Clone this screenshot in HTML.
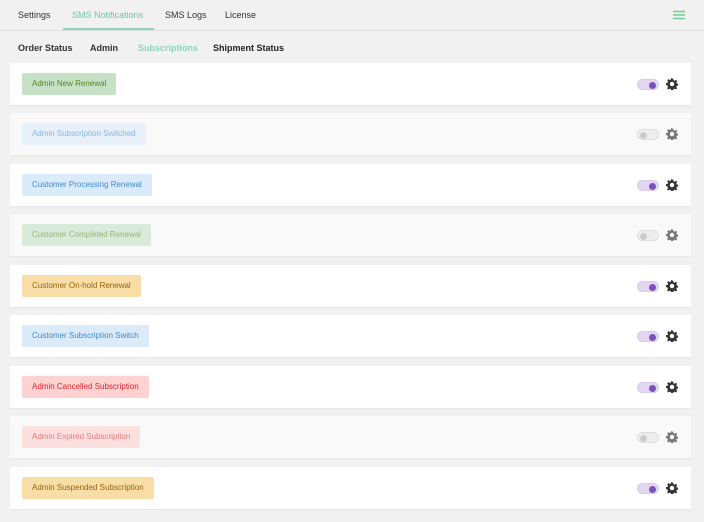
<!DOCTYPE html><html><head><style>
body{margin:0;width:704px;height:522px;background:#f1f1f1;font-family:"Liberation Sans",sans-serif;position:relative;overflow:hidden}
.tabs{position:absolute;top:0;left:0;right:0;height:30px;border-bottom:1px solid #ddd}
.tab{position:absolute;top:10px;font-size:9px;color:#333}
.tab.on{color:#6fc3a9}
.ul{position:absolute;left:63px;top:28px;width:91px;height:2px;background:#8fd3bd}
.sub{position:absolute;top:43px;font-size:9px;font-weight:bold;color:#333}
.card{position:absolute;left:10px;width:681px;height:42px;background:#fff;box-shadow:0 1px 1px rgba(0,0,0,.05)}
.card.off{background:#f9f9f9}
.b{position:absolute;left:12px;top:10px;height:22px;line-height:22px;padding:0 10px;font-size:8px;border-radius:2px}
.off .b{opacity:.6}
.g{background:#c6e1c6;color:#5b841b}.bl{background:#dcebf9;color:#3d8ad1}.o{background:#f8dda7;color:#94660c}.r{background:#ffd1d1;color:#e0242b}
.t{position:absolute;left:627px;top:16px;width:22px;height:11px;border-radius:6px;background:#e2d6f0;border:1px solid #d8cbe8;box-sizing:border-box}
.t::after{content:"";position:absolute;right:2px;top:1.5px;width:7px;height:7px;border-radius:50%;background:#7e4fc0}
.off .t{background:#eee;border-color:#ddd}
.off .t::after{left:2px;right:auto;background:#ccc}
.gear{position:absolute;left:656px;top:15px;width:12px;height:12px}
</style></head><body>
<div class="tabs">
<span class="tab" style="left:18px">Settings</span>
<span class="tab on" style="left:72px">SMS Notifications</span>
<span class="tab" style="left:165px">SMS Logs</span>
<span class="tab" style="left:225px">License</span>
<div class="ul"></div>
<svg style="position:absolute;left:673px;top:10px" width="12" height="10"><path d="M0 1.5h12M0 5h12M0 8.5h12" stroke="#6fcf97" stroke-width="1.5"/></svg>
</div>
<span class="sub" style="left:18px">Order Status</span>
<span class="sub" style="left:90px">Admin</span>
<span class="sub" style="left:138px;color:#8fd3bd">Subscriptions</span>
<span class="sub" style="left:213px;color:#222">Shipment Status</span>
<svg width="0" height="0" style="position:absolute"><defs><g id="gr"><path d="M6 0.5l1.2.1.3 1.6 1.1.5 1.4-.9 1.2 1.2-.9 1.4.5 1.1 1.6.3v1.7l-1.6.3-.5 1.1.9 1.4-1.2 1.2-1.4-.9-1.1.5-.3 1.6H5.1l-.3-1.6-1.1-.5-1.4.9-1.2-1.2.9-1.4-.5-1.1L0 6.8V5.1l1.6-.3.5-1.1-.9-1.4 1.2-1.2 1.4.9 1.1-.5.3-1.6z M6 3.8a2.2 2.2 0 1 0 .01 0z" fill-rule="evenodd"/></g></defs></svg>
<div class="card" style="top:63px"><span class="b g">Admin New Renewal</span><div class="t"></div><svg class="gear" viewBox="0 0 12 12" fill="#333"><use href="#gr"/></svg></div>
<div class="card off" style="top:113px"><span class="b bl">Admin Subscription Switched</span><div class="t"></div><svg class="gear" viewBox="0 0 12 12" fill="#777"><use href="#gr"/></svg></div>
<div class="card" style="top:164px"><span class="b bl">Customer Processing Renewal</span><div class="t"></div><svg class="gear" viewBox="0 0 12 12" fill="#333"><use href="#gr"/></svg></div>
<div class="card off" style="top:214px"><span class="b g">Customer Completed Renewal</span><div class="t"></div><svg class="gear" viewBox="0 0 12 12" fill="#777"><use href="#gr"/></svg></div>
<div class="card" style="top:265px"><span class="b o">Customer On-hold Renewal</span><div class="t"></div><svg class="gear" viewBox="0 0 12 12" fill="#333"><use href="#gr"/></svg></div>
<div class="card" style="top:315px"><span class="b bl">Customer Subscription Switch</span><div class="t"></div><svg class="gear" viewBox="0 0 12 12" fill="#333"><use href="#gr"/></svg></div>
<div class="card" style="top:366px"><span class="b r">Admin Cancelled Subscription</span><div class="t"></div><svg class="gear" viewBox="0 0 12 12" fill="#333"><use href="#gr"/></svg></div>
<div class="card off" style="top:416px"><span class="b r">Admin Expired Subscription</span><div class="t"></div><svg class="gear" viewBox="0 0 12 12" fill="#777"><use href="#gr"/></svg></div>
<div class="card" style="top:467px"><span class="b o">Admin Suspended Subscription</span><div class="t"></div><svg class="gear" viewBox="0 0 12 12" fill="#333"><use href="#gr"/></svg></div>
</body></html>
